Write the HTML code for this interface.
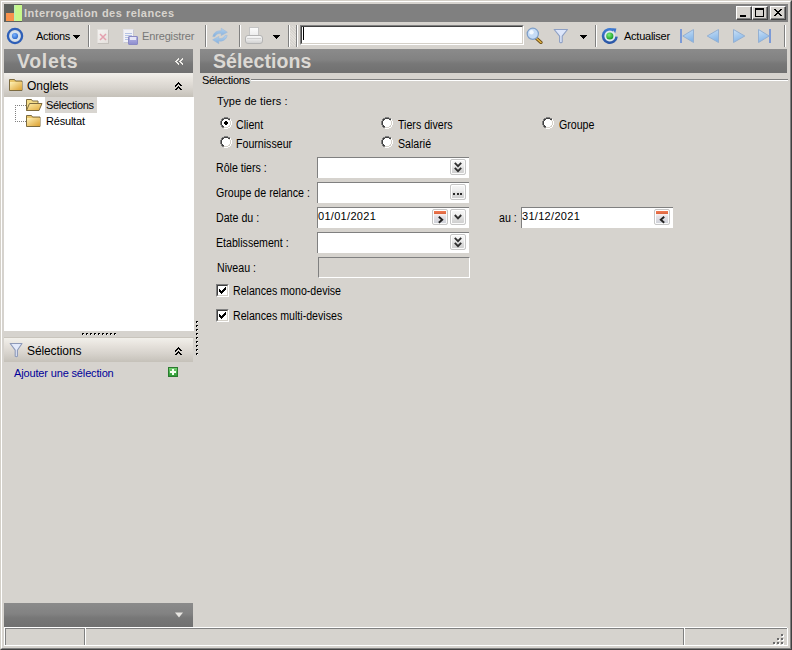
<!DOCTYPE html>
<html><head><meta charset="utf-8">
<style>
*{margin:0;padding:0;box-sizing:border-box}
html,body{width:792px;height:650px;overflow:hidden;background:#d6d3ce}
body{position:relative;font-family:"Liberation Sans",sans-serif;font-size:11px;color:#000}
.a{position:absolute}
.t{position:absolute;white-space:nowrap;line-height:13px;font-size:11px;letter-spacing:-0.3px}
.t2{position:absolute;white-space:nowrap;line-height:14px;font-size:12px;transform:scaleX(0.885);transform-origin:0 0}
.sep{position:absolute;top:25px;width:2px;height:22px;border-left:1px solid #808080;border-right:1px solid #fff}
.hdr{position:absolute;top:49px;height:24px;background:linear-gradient(#8b8b8b 0%,#828282 45%,#777 62%,#707070 100%)}
.shdr{position:absolute;left:4px;width:189px;height:24px;background:linear-gradient(#f2f0eb 0%,#e6e2dc 30%,#d8d4ce 62%,#c5c1b9 100%)}
.box{position:absolute;height:21px;background:#fff;border-top:1px solid #808080;border-left:1px solid #808080}
.btn{position:absolute;width:16px;height:16px;border:1px solid #c6c6c6;border-radius:2px;box-shadow:inset 1px 1px 0 #fff,inset -1px -1px 0 #fafafa;background:linear-gradient(#f7f7f7 0%,#ededed 40%,#dcdcdc 60%,#cdcdcd 100%)}
</style></head><body>
<!-- window frame -->
<div class="a" style="left:0;top:0;width:792px;height:650px;border-top:1px solid #d4d0c8;border-left:1px solid #d4d0c8;border-right:1px solid #404040;border-bottom:1px solid #404040"></div>
<div class="a" style="left:1px;top:1px;width:790px;height:648px;border-top:1px solid #fff;border-left:1px solid #fff;border-right:1px solid #808080;border-bottom:1px solid #808080"></div>

<!-- title bar -->
<div class="a" style="left:4px;top:4px;width:784px;height:18px;background:#808080"></div>
<div class="a" style="left:4px;top:4px;width:18px;height:18px;background:#5d605c"></div>
<div class="a" style="left:6px;top:13px;width:8px;height:8px;background:#f8924c"></div>
<div class="a" style="left:14px;top:5px;width:8px;height:16px;background:linear-gradient(90deg,#b8f0c0 0,#c8f88c 2px,#c6f88a)"></div>
<div class="t" style="left:24px;top:7px;font-weight:bold;color:#d8d4ce;letter-spacing:0.5px">Interrogation des relances</div>


<!-- title buttons -->
<div class="a" style="left:736px;top:6px;width:16px;height:14px;background:#d6d3ce;border-top:1px solid #fff;border-left:1px solid #fff;border-right:1px solid #404040;border-bottom:1px solid #404040"><div class="a" style="left:0;top:0;width:14px;height:12px;border-right:1px solid #808080;border-bottom:1px solid #808080"></div><div class="a" style="left:3px;top:8px;width:6px;height:2px;background:#000"></div></div>
<div class="a" style="left:752px;top:6px;width:16px;height:14px;background:#d6d3ce;border-top:1px solid #fff;border-left:1px solid #fff;border-right:1px solid #404040;border-bottom:1px solid #404040"><div class="a" style="left:0;top:0;width:14px;height:12px;border-right:1px solid #808080;border-bottom:1px solid #808080"></div><div class="a" style="left:2px;top:1px;width:9px;height:9px;border:1px solid #000;border-top-width:2px"></div></div>
<div class="a" style="left:770px;top:6px;width:16px;height:14px;background:#d6d3ce;border-top:1px solid #fff;border-left:1px solid #fff;border-right:1px solid #404040;border-bottom:1px solid #404040"><div class="a" style="left:0;top:0;width:14px;height:12px;border-right:1px solid #808080;border-bottom:1px solid #808080"></div>
<svg class="a" style="left:3px;top:2px" width="8" height="7" viewBox="0 0 8 7" shape-rendering="crispEdges"><path d="M0 0h2v1h-2zM6 0h2v1h-2zM1 1h2v1h-2zM5 1h2v1h-2zM2 2h4v1h-4zM3 3h2v1h-2zM2 4h4v1h-4zM1 5h2v1h-2zM5 5h2v1h-2zM0 6h2v1h-2zM6 6h2v1h-2z" fill="#000"/></svg></div>

<!-- toolbar -->
<svg class="a" style="left:6px;top:27px" width="18" height="18" viewBox="0 0 18 18"><defs><radialGradient id="dg" cx="0.4" cy="0.35" r="0.7"><stop offset="0" stop-color="#7ab4ff"/><stop offset="1" stop-color="#2a66c8"/></radialGradient></defs><circle cx="9" cy="9" r="5.6" fill="#d6e2ee"/><circle cx="9" cy="9" r="7.1" fill="none" stroke="#2d5fb8" stroke-width="2.3"/><circle cx="9" cy="9" r="3.1" fill="url(#dg)"/></svg>
<div class="t" style="left:36px;top:30px">Actions</div>
<svg class="a" style="left:73px;top:35px" width="7" height="4" viewBox="0 0 7 4" shape-rendering="crispEdges"><path d="M0 0h7v1h-1v1h-1v1h-1v1h-1v-1h-1v-1h-1v-1h-1z" fill="#000"/></svg>
<div class="sep" style="left:88px"></div>
<!-- delete icon (disabled) -->
<div class="a" style="left:97px;top:29px;width:12px;height:15px;background:linear-gradient(135deg,#f6f4f2,#e4e0dc);border-top:1px solid #e2dfdb;border-left:1px solid #e2dfdb;border-right:1px solid #c4c0bb;border-bottom:1px solid #c4c0bb"></div>
<svg class="a" style="left:98px;top:32px" width="10" height="10" viewBox="0 0 10 10"><path d="M2 2l6 6M8 2l-6 6" stroke="#e4a0ae" stroke-width="1.5"/></svg>
<!-- save icon (disabled) -->
<div class="a" style="left:123px;top:29px;width:11px;height:14px;background:#f2f2f6;border-top:1px solid #e4e4ec;border-left:1px solid #e4e4ec;border-right:1px solid #c8c8d4;border-bottom:1px solid #c8c8d4"></div>
<svg class="a" style="left:124px;top:32px" width="9" height="9" viewBox="0 0 9 9" shape-rendering="crispEdges"><path d="M1 1.5h7M1 3.5h7M1 5.5h6M1 7.5h4" stroke="#b4c2e4" stroke-width="1"/></svg>
<div class="a" style="left:128px;top:36px;width:10px;height:9px;background:linear-gradient(#b4b4e4,#9090d0);border:1px solid #8a8ac4;border-radius:1px"></div>
<div class="a" style="left:130px;top:37px;width:6px;height:3px;background:#e6e6f6"></div>
<div class="t" style="left:142px;top:30px;color:#777;letter-spacing:-0.15px">Enregistrer</div>
<div class="sep" style="left:205px"></div>
<!-- refresh icon (disabled) -->
<svg class="a" style="left:211px;top:27px" width="18" height="18" viewBox="0 0 18 18"><defs><linearGradient id="rg" x1="0" y1="0" x2="0" y2="1"><stop offset="0" stop-color="#b2d0ee"/><stop offset="1" stop-color="#84b0dc"/></linearGradient></defs><path d="M1.8 9.6C2.6 5.6 6 3.4 10.2 3.9L10.2 1.2L16.4 5.2L10.2 8.6L10.2 6.4C7.2 6.1 4.8 7.4 4 9.6Z" fill="url(#rg)" stroke="#98b6d8" stroke-width="0.5"/><path d="M16.2 8.4C15.4 12.4 12 14.6 7.8 14.1L7.8 16.8L1.6 12.8L7.8 9.4L7.8 11.6C10.8 11.9 13.2 10.6 14 8.4Z" fill="url(#rg)" stroke="#98b6d8" stroke-width="0.5"/></svg>
<div class="sep" style="left:239px"></div>
<!-- printer icon -->
<div class="a" style="left:249px;top:27px;width:10px;height:9px;background:linear-gradient(#fbfbfb,#ececec);border:1px solid #c4c4c4;border-bottom:none"></div>
<div class="a" style="left:245px;top:35px;width:18px;height:9px;background:linear-gradient(#f8f8f8,#e6e6e6 55%,#d2d2d2);border:1px solid #b4b4b4;border-radius:3px"></div>
<div class="a" style="left:247px;top:38px;width:14px;height:1px;background:#d0d0d0"></div>
<svg class="a" style="left:273px;top:35px" width="7" height="4" viewBox="0 0 7 4" shape-rendering="crispEdges"><path d="M0 0h7v1h-1v1h-1v1h-1v1h-1v-1h-1v-1h-1v-1h-1z" fill="#000"/></svg>
<div class="sep" style="left:288px"></div>
<div class="a" style="left:290px;top:26px;width:6px;height:20px;background:repeating-linear-gradient(45deg,#d6d3ce 0 1px,#e2dfda 1px 2px)"></div>
<div class="sep" style="left:296px"></div>
<!-- search box -->
<div class="a" style="left:300px;top:25px;width:224px;height:20px;background:#fff;border-top:1px solid #808080;border-left:1px solid #808080;border-right:1px solid #fff;border-bottom:1px solid #fff"><div class="a" style="left:0;top:0;width:222px;height:18px;border-top:1px solid #404040;border-left:1px solid #404040;border-right:1px solid #d4d0c8;border-bottom:1px solid #d4d0c8"></div></div>
<div class="a" style="left:303px;top:27px;width:1px;height:13px;background:#000"></div>
<!-- search icon -->
<svg class="a" style="left:526px;top:27px" width="18" height="17" viewBox="0 0 18 17"><path d="M9.5 10.5l5.5 5" stroke="#6b4c16" stroke-width="3.2" stroke-linecap="round"/><path d="M9.5 10.5l5.5 5" stroke="#e2b64a" stroke-width="1.6" stroke-linecap="round"/><circle cx="6.8" cy="6.8" r="5.6" fill="#c6dcf6" stroke="#7d9ec8" stroke-width="1.2"/><circle cx="5.5" cy="5.2" r="2.2" fill="#f2f8ff"/></svg>
<!-- funnel -->
<svg class="a" style="left:553px;top:28px" width="16" height="16" viewBox="0 0 16 16"><path d="M1.2 1.5H14.5L9.2 8.2V14.2Q8 15.4 6.6 14.2V8.2Z" fill="#dde6fa" stroke="#8d9fc4" stroke-width="1.1" stroke-linejoin="round"/></svg>
<svg class="a" style="left:580px;top:35px" width="7" height="4" viewBox="0 0 7 4" shape-rendering="crispEdges"><path d="M0 0h7v1h-1v1h-1v1h-1v1h-1v-1h-1v-1h-1v-1h-1z" fill="#000"/></svg>
<div class="sep" style="left:595px"></div>
<!-- actualiser icon -->
<svg class="a" style="left:600px;top:27px" width="19" height="19" viewBox="0 0 19 19"><defs><linearGradient id="ag" x1="0" y1="0" x2="0" y2="1"><stop offset="0" stop-color="#3d7ad2"/><stop offset="1" stop-color="#2a56a6"/></linearGradient><radialGradient id="gg" cx="0.4" cy="0.35" r="0.6"><stop offset="0" stop-color="#7ef07a"/><stop offset="1" stop-color="#1ea02a"/></radialGradient></defs><circle cx="9.8" cy="9" r="5.4" fill="#dde9f2"/><path d="M13.7 3.4A6.8 6.8 0 1 0 16.6 9.6" fill="none" stroke="url(#ag)" stroke-width="2.5"/><path d="M12.2 1.2L16.4 1.4 15.2 6.2z" fill="#3a74cc"/><circle cx="9.8" cy="9" r="3.6" fill="url(#gg)"/></svg>
<div class="t" style="left:624px;top:30px;letter-spacing:-0.25px">Actualiser</div>
<!-- nav icons -->
<svg width="0" height="0" style="position:absolute"><defs><linearGradient id="ng" x1="0" y1="0" x2="0.3" y2="1"><stop offset="0" stop-color="#cde2f6"/><stop offset="1" stop-color="#86b6e8"/></linearGradient></defs></svg>
<svg class="a" style="left:679px;top:28px" width="17" height="16" viewBox="0 0 17 16"><rect x="1" y="1" width="2" height="14" fill="#7c9ad6"/><path d="M3.8 8L14.5 1.5v13z" fill="url(#ng)" stroke="#94b0d2" stroke-width="1"/></svg>
<svg class="a" style="left:706px;top:28px" width="14" height="16" viewBox="0 0 14 16"><path d="M1.2 8L12.5 1.5v13z" fill="url(#ng)" stroke="#94b0d2" stroke-width="1"/></svg>
<svg class="a" style="left:732px;top:28px" width="14" height="16" viewBox="0 0 14 16"><path d="M12.8 8L1.5 1.5v13z" fill="url(#ng)" stroke="#94b0d2" stroke-width="1"/></svg>
<svg class="a" style="left:757px;top:28px" width="17" height="16" viewBox="0 0 17 16"><rect x="12" y="1" width="2" height="14" fill="#7c9ad6"/><path d="M12.2 8L1.5 1.5v13z" fill="url(#ng)" stroke="#94b0d2" stroke-width="1"/></svg>
<div class="sep" style="left:784px"></div>


<!-- LEFT PANE -->
<div class="hdr" style="left:4px;width:189px"></div>
<div class="a" style="left:17px;top:49px;font-size:19.5px;line-height:25px;font-weight:bold;color:#dcd9d4;letter-spacing:0.7px;white-space:nowrap">Volets</div>
<svg class="a" style="left:175px;top:58px" width="8" height="7" viewBox="0 0 8 7" shape-rendering="crispEdges"><g fill="#eeece8"><rect x="3" y="0" width="1" height="1"/><rect x="2" y="1" width="1" height="1"/><rect x="3" y="1" width="1" height="1"/><rect x="1" y="2" width="1" height="1"/><rect x="2" y="2" width="1" height="1"/><rect x="0" y="3" width="1" height="1"/><rect x="1" y="3" width="1" height="1"/><rect x="1" y="4" width="1" height="1"/><rect x="2" y="4" width="1" height="1"/><rect x="2" y="5" width="1" height="1"/><rect x="3" y="5" width="1" height="1"/><rect x="3" y="6" width="1" height="1"/><rect x="7" y="0" width="1" height="1"/><rect x="6" y="1" width="1" height="1"/><rect x="7" y="1" width="1" height="1"/><rect x="5" y="2" width="1" height="1"/><rect x="6" y="2" width="1" height="1"/><rect x="4" y="3" width="1" height="1"/><rect x="5" y="3" width="1" height="1"/><rect x="5" y="4" width="1" height="1"/><rect x="6" y="4" width="1" height="1"/><rect x="6" y="5" width="1" height="1"/><rect x="7" y="5" width="1" height="1"/><rect x="7" y="6" width="1" height="1"/></g></svg>
<div class="shdr" style="top:73px"></div>
<!-- folder icon onglets -->
<svg class="a" style="left:8px;top:77px" width="16" height="15" viewBox="0 0 16 15"><path d="M1.5 2.5h5l1 1.5h6.5v9.5h-12.5z" fill="#e8c56a" stroke="#7c6a3e" stroke-width="1"/><rect x="2" y="5" width="12" height="8" fill="url(#fg)"/><defs><linearGradient id="fg" x1="0" y1="0" x2="1" y2="1"><stop offset="0" stop-color="#fff2b8"/><stop offset="1" stop-color="#dca030"/></linearGradient></defs></svg>
<div class="t" style="left:27px;top:80px;font-size:12px;letter-spacing:0">Onglets</div>
<svg class="a" style="left:175px;top:82px" width="7" height="8" viewBox="0 0 7 8" shape-rendering="crispEdges"><path d="M3 0h1v1h1v1h1v1h1v1h-2v-1h-1v-1h-1v1h-1v1h-1v1h-2v-1h1v-1h1v-1h1zM3 4h1v1h1v1h1v1h1v1h-2v-1h-1v-1h-1v1h-1v1h-1v1h-2v-1h1v-1h1v-1h1z" fill="#000"/></svg>
<!-- tree -->
<div class="a" style="left:4px;top:97px;width:190px;height:234px;background:#fff"></div>
<div class="a" style="left:15px;top:105px;width:1px;height:17px;background:repeating-linear-gradient(#808080 0 1px,transparent 1px 2px)"></div>
<div class="a" style="left:15px;top:105px;width:11px;height:1px;background:repeating-linear-gradient(90deg,#808080 0 1px,transparent 1px 2px)"></div>
<div class="a" style="left:15px;top:121px;width:11px;height:1px;background:repeating-linear-gradient(90deg,#808080 0 1px,transparent 1px 2px)"></div>
<svg class="a" style="left:25px;top:98px" width="18" height="14" viewBox="0 0 18 14"><path d="M1.5 12.5v-11h5l1 1.5h5.5v2" fill="#f4dc88" stroke="#7c6a3e" stroke-width="1"/><path d="M1.5 12.5l3-7h12.5l-3 7z" fill="url(#fo)" stroke="#7c6a3e" stroke-width="1"/><defs><linearGradient id="fo" x1="0" y1="0" x2="1" y2="1"><stop offset="0" stop-color="#fff0b0"/><stop offset="1" stop-color="#e0a838"/></linearGradient></defs></svg>
<div class="a" style="left:45px;top:97px;width:52px;height:16px;background:#d8d5d0"></div>
<div class="t" style="left:46px;top:99px">Sélections</div>
<svg class="a" style="left:25px;top:114px" width="17" height="13" viewBox="0 0 17 13"><path d="M1.5 1.5h5l1 1.5h7.5v9.5h-13.5z" fill="#e8c56a" stroke="#7c6a3e" stroke-width="1"/><rect x="2" y="4" width="13" height="8" fill="url(#fg)"/></svg>
<div class="t" style="left:46px;top:115px;letter-spacing:-0.2px">Résultat</div>
<!-- splitter grip -->
<div class="a" style="left:4px;top:337px;width:190px;height:1px;background:#c9c5bd"></div>
<svg class="a" style="left:82px;top:333px" width="36" height="2" viewBox="0 0 36 2" shape-rendering="crispEdges"><g fill="#000"><rect x="0" y="0" width="2" height="1"/><rect x="0" y="1" width="1" height="1"/><rect x="4" y="0" width="2" height="1"/><rect x="4" y="1" width="1" height="1"/><rect x="8" y="0" width="2" height="1"/><rect x="8" y="1" width="1" height="1"/><rect x="12" y="0" width="2" height="1"/><rect x="12" y="1" width="1" height="1"/><rect x="16" y="0" width="2" height="1"/><rect x="16" y="1" width="1" height="1"/><rect x="20" y="0" width="2" height="1"/><rect x="20" y="1" width="1" height="1"/><rect x="24" y="0" width="2" height="1"/><rect x="24" y="1" width="1" height="1"/><rect x="28" y="0" width="2" height="1"/><rect x="28" y="1" width="1" height="1"/><rect x="32" y="0" width="2" height="1"/><rect x="32" y="1" width="1" height="1"/></g><g fill="#fff"><rect x="1" y="1" width="1" height="1"/><rect x="5" y="1" width="1" height="1"/><rect x="9" y="1" width="1" height="1"/><rect x="13" y="1" width="1" height="1"/><rect x="17" y="1" width="1" height="1"/><rect x="21" y="1" width="1" height="1"/><rect x="25" y="1" width="1" height="1"/><rect x="29" y="1" width="1" height="1"/><rect x="33" y="1" width="1" height="1"/></g></svg>
<!-- selections section -->
<div class="shdr" style="top:338px"></div>
<svg class="a" style="left:9px;top:342px" width="15" height="16" viewBox="0 0 15 16"><path d="M1.2 1.5H13L8.4 8.2V14.2Q7.4 15.4 6.2 14.2V8.2Z" fill="#e2e9fa" stroke="#8d99b8" stroke-width="1.1" stroke-linejoin="round"/></svg>
<div class="t" style="left:27px;top:345px;font-size:12px;letter-spacing:-0.1px">Sélections</div>
<svg class="a" style="left:175px;top:347px" width="7" height="8" viewBox="0 0 7 8" shape-rendering="crispEdges"><path d="M3 0h1v1h1v1h1v1h1v1h-2v-1h-1v-1h-1v1h-1v1h-1v1h-2v-1h1v-1h1v-1h1zM3 4h1v1h1v1h1v1h1v1h-2v-1h-1v-1h-1v1h-1v1h-1v1h-2v-1h1v-1h1v-1h1z" fill="#000"/></svg>
<div class="t" style="left:14px;top:367px;color:#000099;letter-spacing:-0.15px">Ajouter une sélection</div>
<div class="a" style="left:168px;top:367px;width:10px;height:10px;background:linear-gradient(#74d070,#2c9a34);border:1px solid #2a7a2e"></div>
<div class="a" style="left:172px;top:369px;width:2px;height:6px;background:#f4fff0"></div>
<div class="a" style="left:170px;top:371px;width:6px;height:2px;background:#f4fff0"></div>
<!-- vertical splitter dots -->
<svg class="a" style="left:196px;top:321px" width="2" height="36" viewBox="0 0 2 36" shape-rendering="crispEdges"><g fill="#000"><rect x="0" y="0" width="2" height="1"/><rect x="0" y="1" width="1" height="1"/><rect x="0" y="4" width="2" height="1"/><rect x="0" y="5" width="1" height="1"/><rect x="0" y="8" width="2" height="1"/><rect x="0" y="9" width="1" height="1"/><rect x="0" y="12" width="2" height="1"/><rect x="0" y="13" width="1" height="1"/><rect x="0" y="16" width="2" height="1"/><rect x="0" y="17" width="1" height="1"/><rect x="0" y="20" width="2" height="1"/><rect x="0" y="21" width="1" height="1"/><rect x="0" y="24" width="2" height="1"/><rect x="0" y="25" width="1" height="1"/><rect x="0" y="28" width="2" height="1"/><rect x="0" y="29" width="1" height="1"/><rect x="0" y="32" width="2" height="1"/><rect x="0" y="33" width="1" height="1"/></g><g fill="#fff"><rect x="1" y="1" width="1" height="1"/><rect x="1" y="5" width="1" height="1"/><rect x="1" y="9" width="1" height="1"/><rect x="1" y="13" width="1" height="1"/><rect x="1" y="17" width="1" height="1"/><rect x="1" y="21" width="1" height="1"/><rect x="1" y="25" width="1" height="1"/><rect x="1" y="29" width="1" height="1"/><rect x="1" y="33" width="1" height="1"/></g></svg>
<!-- bottom bar -->
<div class="hdr" style="left:4px;top:603px;width:189px"></div>
<svg class="a" style="left:174px;top:612px" width="10" height="6" viewBox="0 0 10 6"><path d="M1 0.5h8l-4 5z" fill="#e8e6e2"/></svg>

<!-- status bar -->
<div class="a" style="left:4px;top:627px;width:783px;height:1px;background:#fff"></div>
<div class="a" style="left:5px;top:628px;width:782px;height:1px;background:#808080"></div>
<div class="a" style="left:4px;top:627px;width:1px;height:19px;background:#fff"></div>
<div class="a" style="left:5px;top:628px;width:1px;height:18px;background:#808080"></div>
<div class="a" style="left:5px;top:645px;width:783px;height:1px;background:#fff"></div>
<div class="a" style="left:787px;top:628px;width:1px;height:18px;background:#fff"></div>
<div class="a" style="left:84px;top:628px;width:1px;height:17px;background:#808080"></div>
<div class="a" style="left:85px;top:628px;width:1px;height:17px;background:#fff"></div>
<div class="a" style="left:683px;top:628px;width:1px;height:17px;background:#808080"></div>
<div class="a" style="left:684px;top:628px;width:1px;height:17px;background:#fff"></div>
<svg class="a" style="left:773px;top:633px" width="12" height="12" viewBox="0 0 12 12" shape-rendering="crispEdges"><g fill="#fff"><rect x="9" y="3" width="2" height="1"/><rect x="10" y="2" width="1" height="1"/><rect x="5" y="7" width="2" height="1"/><rect x="6" y="6" width="1" height="1"/><rect x="9" y="7" width="2" height="1"/><rect x="10" y="6" width="1" height="1"/><rect x="1" y="11" width="2" height="1"/><rect x="2" y="10" width="1" height="1"/><rect x="5" y="11" width="2" height="1"/><rect x="6" y="10" width="1" height="1"/><rect x="9" y="11" width="2" height="1"/><rect x="10" y="10" width="1" height="1"/></g><g fill="#6a6a6a"><rect x="8" y="1" width="2" height="2"/><rect x="4" y="5" width="2" height="2"/><rect x="8" y="5" width="2" height="2"/><rect x="0" y="9" width="2" height="2"/><rect x="4" y="9" width="2" height="2"/><rect x="8" y="9" width="2" height="2"/></g></svg>

<!-- RIGHT PANE -->
<svg width="0" height="0" style="position:absolute"><defs><g id="radio"><g fill="#fff"><rect x="4" y="2" width="1" height="1"/><rect x="5" y="2" width="1" height="1"/><rect x="6" y="2" width="1" height="1"/><rect x="7" y="2" width="1" height="1"/><rect x="3" y="3" width="1" height="1"/><rect x="4" y="3" width="1" height="1"/><rect x="5" y="3" width="1" height="1"/><rect x="6" y="3" width="1" height="1"/><rect x="7" y="3" width="1" height="1"/><rect x="8" y="3" width="1" height="1"/><rect x="2" y="4" width="1" height="1"/><rect x="3" y="4" width="1" height="1"/><rect x="4" y="4" width="1" height="1"/><rect x="5" y="4" width="1" height="1"/><rect x="6" y="4" width="1" height="1"/><rect x="7" y="4" width="1" height="1"/><rect x="8" y="4" width="1" height="1"/><rect x="9" y="4" width="1" height="1"/><rect x="2" y="5" width="1" height="1"/><rect x="3" y="5" width="1" height="1"/><rect x="4" y="5" width="1" height="1"/><rect x="5" y="5" width="1" height="1"/><rect x="6" y="5" width="1" height="1"/><rect x="7" y="5" width="1" height="1"/><rect x="8" y="5" width="1" height="1"/><rect x="9" y="5" width="1" height="1"/><rect x="2" y="6" width="1" height="1"/><rect x="3" y="6" width="1" height="1"/><rect x="4" y="6" width="1" height="1"/><rect x="5" y="6" width="1" height="1"/><rect x="6" y="6" width="1" height="1"/><rect x="7" y="6" width="1" height="1"/><rect x="8" y="6" width="1" height="1"/><rect x="9" y="6" width="1" height="1"/><rect x="2" y="7" width="1" height="1"/><rect x="3" y="7" width="1" height="1"/><rect x="4" y="7" width="1" height="1"/><rect x="5" y="7" width="1" height="1"/><rect x="6" y="7" width="1" height="1"/><rect x="7" y="7" width="1" height="1"/><rect x="8" y="7" width="1" height="1"/><rect x="9" y="7" width="1" height="1"/><rect x="3" y="8" width="1" height="1"/><rect x="4" y="8" width="1" height="1"/><rect x="5" y="8" width="1" height="1"/><rect x="6" y="8" width="1" height="1"/><rect x="7" y="8" width="1" height="1"/><rect x="8" y="8" width="1" height="1"/><rect x="4" y="9" width="1" height="1"/><rect x="5" y="9" width="1" height="1"/><rect x="6" y="9" width="1" height="1"/><rect x="7" y="9" width="1" height="1"/><rect x="10" y="2" width="1" height="1"/><rect x="10" y="3" width="1" height="1"/><rect x="11" y="4" width="1" height="1"/><rect x="11" y="5" width="1" height="1"/><rect x="11" y="6" width="1" height="1"/><rect x="11" y="7" width="1" height="1"/><rect x="10" y="8" width="1" height="1"/><rect x="10" y="9" width="1" height="1"/><rect x="8" y="10" width="1" height="1"/><rect x="9" y="10" width="1" height="1"/><rect x="4" y="11" width="1" height="1"/><rect x="5" y="11" width="1" height="1"/><rect x="6" y="11" width="1" height="1"/><rect x="7" y="11" width="1" height="1"/></g><g fill="#808080"><rect x="4" y="0" width="1" height="1"/><rect x="5" y="0" width="1" height="1"/><rect x="6" y="0" width="1" height="1"/><rect x="7" y="0" width="1" height="1"/><rect x="2" y="1" width="1" height="1"/><rect x="3" y="1" width="1" height="1"/><rect x="8" y="1" width="1" height="1"/><rect x="9" y="1" width="1" height="1"/><rect x="1" y="2" width="1" height="1"/><rect x="1" y="3" width="1" height="1"/><rect x="0" y="4" width="1" height="1"/><rect x="0" y="5" width="1" height="1"/><rect x="0" y="6" width="1" height="1"/><rect x="0" y="7" width="1" height="1"/><rect x="1" y="8" width="1" height="1"/><rect x="1" y="9" width="1" height="1"/><rect x="2" y="10" width="1" height="1"/><rect x="3" y="10" width="1" height="1"/></g><g fill="#404040"><rect x="4" y="1" width="1" height="1"/><rect x="5" y="1" width="1" height="1"/><rect x="6" y="1" width="1" height="1"/><rect x="7" y="1" width="1" height="1"/><rect x="2" y="2" width="1" height="1"/><rect x="3" y="2" width="1" height="1"/><rect x="8" y="2" width="1" height="1"/><rect x="9" y="2" width="1" height="1"/><rect x="2" y="3" width="1" height="1"/><rect x="1" y="4" width="1" height="1"/><rect x="1" y="5" width="1" height="1"/><rect x="1" y="6" width="1" height="1"/><rect x="1" y="7" width="1" height="1"/><rect x="2" y="8" width="1" height="1"/><rect x="2" y="9" width="1" height="1"/><rect x="3" y="9" width="1" height="1"/></g><g fill="#d4d0c8"><rect x="9" y="3" width="1" height="1"/><rect x="10" y="4" width="1" height="1"/><rect x="10" y="5" width="1" height="1"/><rect x="10" y="6" width="1" height="1"/><rect x="10" y="7" width="1" height="1"/><rect x="9" y="8" width="1" height="1"/><rect x="8" y="9" width="1" height="1"/><rect x="9" y="9" width="1" height="1"/><rect x="4" y="10" width="1" height="1"/><rect x="5" y="10" width="1" height="1"/><rect x="6" y="10" width="1" height="1"/><rect x="7" y="10" width="1" height="1"/></g></g><g id="rdot" fill="#000"><rect x="5" y="4" width="2" height="1"/><rect x="4" y="5" width="4" height="2"/><rect x="5" y="7" width="2" height="1"/></g></defs></svg>
<div class="hdr" style="left:200px;width:587px"></div>
<div class="a" style="left:213px;top:49px;font-size:19.5px;line-height:25px;font-weight:bold;color:#dcd9d4;letter-spacing:0.1px;white-space:nowrap">Sélections</div>
<!-- group box -->
<div class="a" style="left:251px;top:79px;width:537px;height:1px;background:#808080"></div>
<div class="a" style="left:251px;top:80px;width:537px;height:1px;background:#fff"></div>
<div class="t" style="left:202px;top:74px">Sélections</div>
<div class="t" style="left:217px;top:95px;letter-spacing:0.1px">Type de tiers :</div>
<svg class="a" style="left:220px;top:117px" width="12" height="12" viewBox="0 0 12 12" shape-rendering="crispEdges"><use href="#radio"/><use href="#rdot"/></svg>
<div class="t2" style="left:236px;top:118px">Client</div>
<svg class="a" style="left:220px;top:136px" width="12" height="12" viewBox="0 0 12 12" shape-rendering="crispEdges"><use href="#radio"/></svg>
<div class="t2" style="left:236px;top:137px">Fournisseur</div>
<svg class="a" style="left:381px;top:117px" width="12" height="12" viewBox="0 0 12 12" shape-rendering="crispEdges"><use href="#radio"/></svg>
<div class="t2" style="left:398px;top:118px">Tiers divers</div>
<svg class="a" style="left:381px;top:136px" width="12" height="12" viewBox="0 0 12 12" shape-rendering="crispEdges"><use href="#radio"/></svg>
<div class="t2" style="left:398px;top:137px">Salarié</div>
<svg class="a" style="left:542px;top:117px" width="12" height="12" viewBox="0 0 12 12" shape-rendering="crispEdges"><use href="#radio"/></svg>
<div class="t2" style="left:559px;top:118px">Groupe</div>
<!-- fields -->
<div class="t2" style="left:216px;top:161px">Rôle tiers :</div>
<div class="box" style="left:317px;top:157px;width:152px"><div class="btn" style="left:132px;top:1px"><svg class="a" style="left:3px;top:2px" width="9" height="11" viewBox="0 0 9 11"><path d="M0.8 0.9L4 4.1 7.2 0.9M0.8 5.9L4 9.1 7.2 5.9" fill="none" stroke="#2e2e2e" stroke-width="1.9"/></svg></div></div>
<div class="t2" style="left:216px;top:186px">Groupe de relance :</div>
<div class="box" style="left:317px;top:182px;width:152px"><div class="btn" style="left:132px;top:1px"><div class="a" style="left:2px;top:8px;width:2px;height:2px;background:#2a2a2a"></div><div class="a" style="left:5.5px;top:8px;width:2px;height:2px;background:#2a2a2a"></div><div class="a" style="left:9px;top:8px;width:2px;height:2px;background:#2a2a2a"></div></div></div>
<div class="t2" style="left:216px;top:211px">Date du :</div>
<div class="box" style="left:317px;top:207px;width:152px"><div class="t" style="left:0px;top:2px;letter-spacing:0.3px">01/01/2021</div><div class="btn" style="left:114px;top:1px"><div class="a" style="left:1px;top:1px;width:12px;height:3px;background:linear-gradient(#f07a52,#dc643e)"></div><div class="a" style="left:1px;top:4px;width:12px;height:9px;background:linear-gradient(#fbefee,#e4e0e4 30%,#cfd2da)"></div><svg class="a" style="left:5px;top:6px" width="6" height="8" viewBox="0 0 6 8"><path d="M0.8 0.8L4.2 3.8 0.8 6.8" fill="none" stroke="#222" stroke-width="1.9"/></svg></div><div class="btn" style="left:132px;top:1px"><svg class="a" style="left:3px;top:4px" width="9" height="7" viewBox="0 0 9 7"><path d="M0.8 1L4 4.3 7.2 1" fill="none" stroke="#2e2e2e" stroke-width="1.9"/></svg></div></div>
<div class="t2" style="left:499px;top:211px">au :</div>
<div class="box" style="left:521px;top:207px;width:152px"><div class="t" style="left:0px;top:2px;letter-spacing:0.3px">31/12/2021</div><div class="btn" style="left:132px;top:1px"><div class="a" style="left:1px;top:1px;width:12px;height:3px;background:linear-gradient(#f07a52,#dc643e)"></div><div class="a" style="left:1px;top:4px;width:12px;height:9px;background:linear-gradient(#fbefee,#e4e0e4 30%,#cfd2da)"></div><svg class="a" style="left:4px;top:6px" width="6" height="8" viewBox="0 0 6 8"><path d="M5.2 0.8L1.8 3.8 5.2 6.8" fill="none" stroke="#222" stroke-width="1.9"/></svg></div></div>
<div class="t2" style="left:216px;top:236px">Etablissement :</div>
<div class="box" style="left:317px;top:232px;width:152px"><div class="btn" style="left:132px;top:1px"><svg class="a" style="left:3px;top:2px" width="9" height="11" viewBox="0 0 9 11"><path d="M0.8 0.9L4 4.1 7.2 0.9M0.8 5.9L4 9.1 7.2 5.9" fill="none" stroke="#2e2e2e" stroke-width="1.9"/></svg></div></div>
<div class="t2" style="left:217px;top:261px">Niveau :</div>
<div class="box" style="left:318px;top:257px;width:152px;background:#d6d3ce;border-right:1px solid #fff;border-bottom:1px solid #fff"></div>
<!-- checkboxes -->
<div class="a" style="left:216px;top:284px;width:13px;height:13px;background:#fff;border-top:1px solid #808080;border-left:1px solid #808080;border-right:1px solid #fff;border-bottom:1px solid #fff"><div class="a" style="left:0;top:0;width:11px;height:11px;border-top:1px solid #404040;border-left:1px solid #404040;border-right:1px solid #d4d0c8;border-bottom:1px solid #d4d0c8"></div><svg class="a" style="left:2px;top:2px" width="7" height="7" viewBox="0 0 7 7" shape-rendering="crispEdges"><path d="M6 0h1v3h-1v1h-1v1h-1v1h-1v1h-1v-1h-1v-1h-1v-3h1v1h1v1h1v-1h1v-1h1v-1h1z" fill="#000"/></svg></div>
<div class="t2" style="left:233px;top:284px">Relances mono-devise</div>
<div class="a" style="left:216px;top:309px;width:13px;height:13px;background:#fff;border-top:1px solid #808080;border-left:1px solid #808080;border-right:1px solid #fff;border-bottom:1px solid #fff"><div class="a" style="left:0;top:0;width:11px;height:11px;border-top:1px solid #404040;border-left:1px solid #404040;border-right:1px solid #d4d0c8;border-bottom:1px solid #d4d0c8"></div><svg class="a" style="left:2px;top:2px" width="7" height="7" viewBox="0 0 7 7" shape-rendering="crispEdges"><path d="M6 0h1v3h-1v1h-1v1h-1v1h-1v1h-1v-1h-1v-1h-1v-3h1v1h1v1h1v-1h1v-1h1v-1h1z" fill="#000"/></svg></div>
<div class="t2" style="left:233px;top:309px">Relances multi-devises</div>

</body></html>
